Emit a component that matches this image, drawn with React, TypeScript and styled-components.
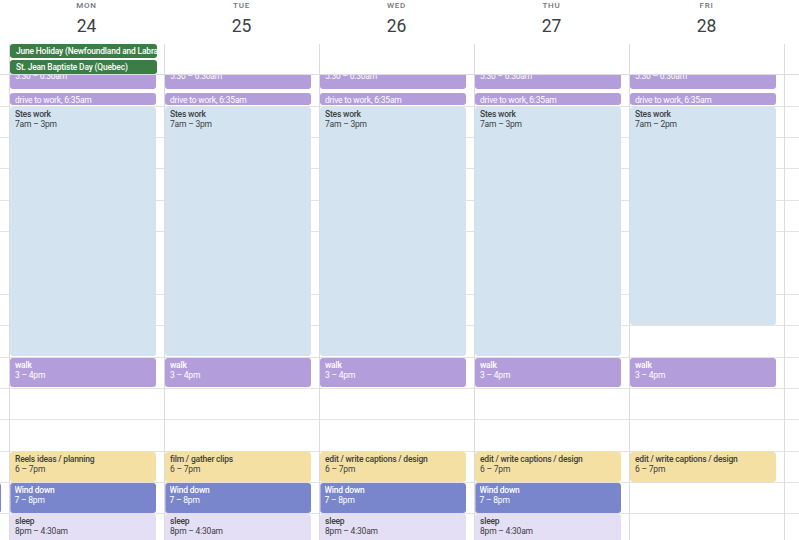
import React from "react";
import styled, { createGlobalStyle } from "styled-components";

const H = 31.375; // px per hour
const COL = 155;
const OFFSET = 7 * H - 31.5; // scroll offset of the body

const Global = createGlobalStyle`
  html, body { margin: 0; padding: 0; background: #fff; }
  body { font-family: Roboto, "Liberation Sans", Arial, sans-serif; }
`;

type Kind = "blue" | "purple" | "yellow" | "indigo" | "lilac";

interface Ev {
  title: string;
  time: string;
  start: number;
  end: number;
  kind: Kind;
  inline?: boolean;
  stripe?: boolean;
}

const palette: Record<Kind, { bg: string; fg: string }> = {
  blue: { bg: "#d3e4f0", fg: "#3c4043" },
  purple: { bg: "#b39ddb", fg: "#ffffff" },
  yellow: { bg: "#f5e0a4", fg: "#3c4043" },
  indigo: { bg: "#7986cb", fg: "#ffffff" },
  lilac: { bg: "#e5dff6", fg: "#3c4043" },
};

const morning: Ev[] = [
  { title: "", time: "5:30 – 6:30am", start: 5.5, end: 6.5, kind: "purple" },
  { title: "drive to work", time: "6:35am", start: 6 + 35 / 60, end: 7, kind: "purple", inline: true },
];

const evening = (label: string): Ev[] => [
  { title: label, time: "6 – 7pm", start: 18, end: 19, kind: "yellow" },
  { title: "Wind down", time: "7 – 8pm", start: 19, end: 20, kind: "indigo", stripe: true },
  { title: "sleep", time: "8pm – 4:30am", start: 20, end: 24, kind: "lilac" },
];

const walk: Ev = { title: "walk", time: "3 – 4pm", start: 15, end: 16, kind: "purple" };

interface Day {
  key: string;
  name: string;
  num: string;
  allDay: string[];
  events: Ev[];
}

const days: Day[] = [
  {
    key: "sun",
    name: "",
    num: "",
    allDay: [],
    events: [{ title: "", time: "", start: 19, end: 20, kind: "indigo" }],
  },
  {
    key: "mon",
    name: "MON",
    num: "24",
    allDay: ["June Holiday (Newfoundland and Labrador)", "St. Jean Baptiste Day (Quebec)"],
    events: [
      ...morning,
      { title: "Stes work", time: "7am – 3pm", start: 7, end: 15, kind: "blue" },
      walk,
      ...evening("Reels ideas / planning"),
    ],
  },
  {
    key: "tue",
    name: "TUE",
    num: "25",
    allDay: [],
    events: [
      ...morning,
      { title: "Stes work", time: "7am – 3pm", start: 7, end: 15, kind: "blue" },
      walk,
      ...evening("film / gather clips"),
    ],
  },
  {
    key: "wed",
    name: "WED",
    num: "26",
    allDay: [],
    events: [
      ...morning,
      { title: "Stes work", time: "7am – 3pm", start: 7, end: 15, kind: "blue" },
      walk,
      ...evening("edit / write captions / design"),
    ],
  },
  {
    key: "thu",
    name: "THU",
    num: "27",
    allDay: [],
    events: [
      ...morning,
      { title: "Stes work", time: "7am – 3pm", start: 7, end: 15, kind: "blue" },
      walk,
      ...evening("edit / write captions / design"),
    ],
  },
  {
    key: "fri",
    name: "FRI",
    num: "28",
    allDay: [],
    events: [
      ...morning,
      { title: "Stes work", time: "7am – 2pm", start: 7, end: 14, kind: "blue" },
      walk,
      { title: "edit / write captions / design", time: "6 – 7pm", start: 18, end: 19, kind: "yellow" },
    ],
  },
  { key: "sat", name: "", num: "", allDay: [], events: [] },
];

const Page = styled.div`
  width: 799px;
  height: 540px;
  overflow: hidden;
  background: #fff;
`;

const Track = styled.div`
  width: ${COL * 7}px;
  margin-left: -${COL - 9}px;
  display: flex;
  flex-direction: column;
`;

const Row = styled.div`
  display: grid;
  grid-template-columns: repeat(7, ${COL}px);
`;

const DayHead = styled.div`
  height: 44px;
  display: flex;
  flex-direction: column;
  align-items: center;
`;

const DayName = styled.div`
  margin-top: 1px;
  height: 10px;
  font-size: 8px;
  line-height: 10px;
  font-weight: 500;
  letter-spacing: 0.8px;
  color: #70757a;
`;

const DayNum = styled.div`
  margin-top: 5px;
  height: 20px;
  font-size: 17.5px;
  line-height: 20px;
  color: #3c4043;
`;

const AllDayRow = styled(Row)`
  border-bottom: 1px solid #dadce0;
`;

const AllDayCell = styled.div`
  height: 30px;
  border-left: 1px solid #dadce0;
  display: flex;
  flex-direction: column;
  gap: 1.5px;
  padding-right: 7px;
  min-width: 0;
`;

const Chip = styled.div`
  height: 14.5px;
  border-radius: 3px;
  background: #3b7d44;
  color: #fff;
  font-size: 8.4px;
  font-weight: 500;
  letter-spacing: -0.15px;
  line-height: 14.5px;
  padding-left: 6px;
  white-space: nowrap;
  overflow: hidden;
`;

const Body = styled.div`
  height: 465px;
  overflow: hidden;
`;

const BodyGrid = styled(Row)`
  margin-top: -${OFFSET}px;
  height: ${24 * H}px;
  background-image: repeating-linear-gradient(
    to bottom,
    transparent 0,
    transparent ${H - 1}px,
    #e3e3e3 ${H - 1}px,
    #e3e3e3 ${H}px
  );
`;

const DayColumn = styled.div`
  position: relative;
  border-left: 1px solid #dadce0;
`;

const Event = styled.div<{ $kind: Kind; $stripe?: boolean }>`
  position: absolute;
  left: 0;
  right: 8px;
  box-sizing: border-box;
  border-radius: 3px;
  background: ${(p) => palette[p.$kind].bg};
  color: ${(p) => palette[p.$kind].fg};
  padding: 2px 5px 0;
  overflow: hidden;
  font-size: 8.5px;
  letter-spacing: -0.2px;
  line-height: 10px;
  border-left: ${(p) => (p.$stripe ? "1.5px solid #b8a7e0" : "none")};
  padding-left: ${(p) => (p.$stripe ? "3.5px" : "5px")};
`;

const Title = styled.div`
  font-weight: 500;
  white-space: nowrap;
  overflow: hidden;
  min-height: 10px;
`;

const Time = styled.div`
  font-weight: 400;
  white-space: nowrap;
`;

const InlineLine = styled.div`
  white-space: nowrap;
  overflow: hidden;
  font-weight: 400;
  margin-top: -0.5px;
`;

export default function App() {
  return (
    <Page>
      <Global />
      <Track>
        <Row>
          {days.map((d) => (
            <DayHead key={d.key}>
              <DayName>{d.name}</DayName>
              <DayNum>{d.num}</DayNum>
            </DayHead>
          ))}
        </Row>
        <AllDayRow>
          {days.map((d) => (
            <AllDayCell key={d.key}>
              {d.allDay.map((a) => (
                <Chip key={a}>{a}</Chip>
              ))}
            </AllDayCell>
          ))}
        </AllDayRow>
        <Body>
          <BodyGrid>
            {days.map((d) => (
              <DayColumn key={d.key}>
                {d.events.map((e, i) => (
                  <Event
                    key={i}
                    $kind={e.kind}
                    $stripe={e.stripe}
                    style={{ top: e.start * H, height: (e.end - e.start) * H - 1.5 }}
                  >
                    {e.inline ? (
                      <InlineLine>
                        {e.title}, {e.time}
                      </InlineLine>
                    ) : e.time ? (
                      <>
                        <Title>{e.title}</Title>
                        <Time>{e.time}</Time>
                      </>
                    ) : null}
                  </Event>
                ))}
              </DayColumn>
            ))}
          </BodyGrid>
        </Body>
      </Track>
    </Page>
  );
}
